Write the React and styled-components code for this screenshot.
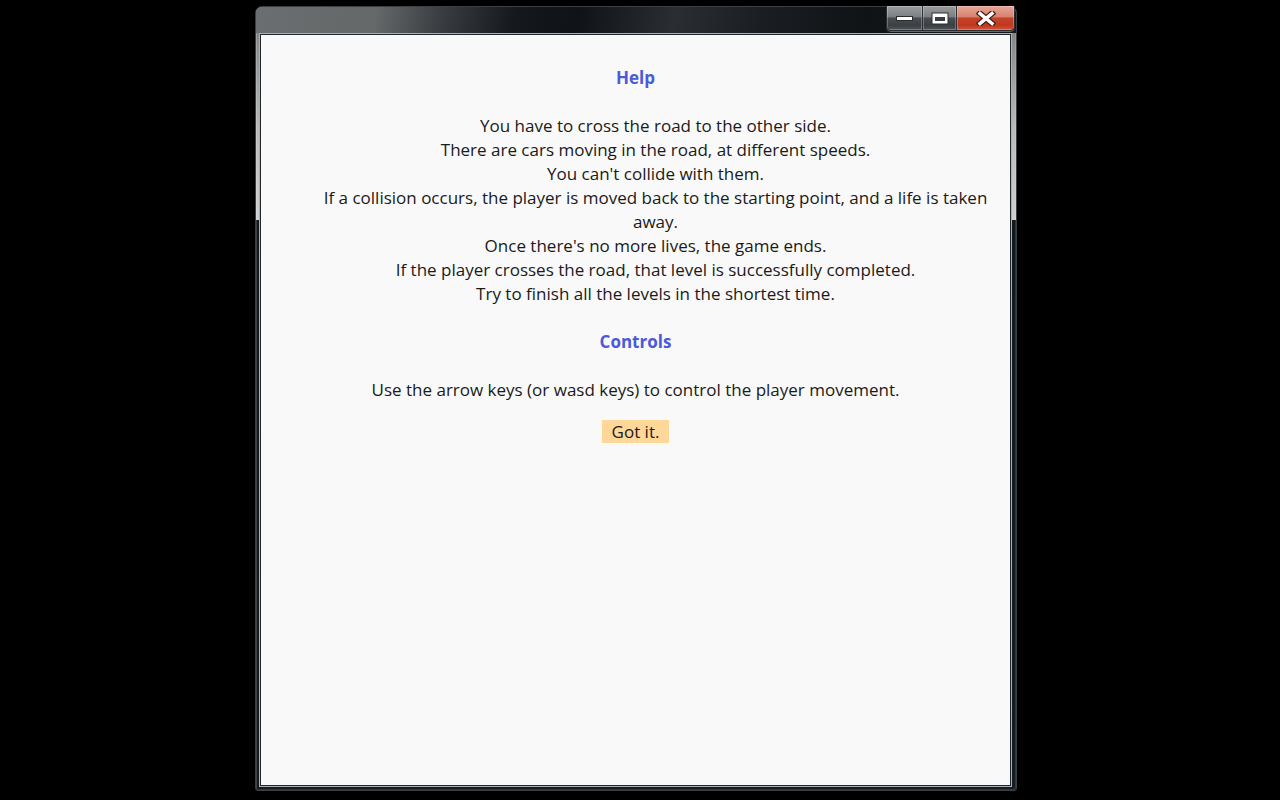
import React from "react";
import styled, { createGlobalStyle } from "styled-components";

const Global = createGlobalStyle`
  html, body { margin: 0; padding: 0; background: #000; }
  body { font-family: "Open Sans", "Noto Sans", sans-serif; }
`;

const Page = styled.div`
  width: 1280px;
  height: 800px;
  display: flex;
  justify-content: flex-start;
  align-items: flex-start;
  padding: 6px 0 0 255px;
  box-sizing: border-box;
  background: #000;
`;

const Window = styled.div`
  width: 762px;
  height: 785px;
  box-sizing: border-box;
  border-radius: 7px 7px 3px 3px;
  border: 1px solid #3a3f44;
  display: flex;
  flex-direction: column;
  padding: 0 5px 4px 4px;
  background:
    linear-gradient(to bottom, transparent 0, transparent 213px, #12181e 213px, #161c22 100%),
    linear-gradient(to bottom, #6e7173 0, #8d8f90 40px, #b9b9b9 120px, #cfcfcf 213px);
  box-shadow: inset 1px 1px 0 rgba(255, 255, 255, 0.18), inset -1px -1px 0 rgba(255, 255, 255, 0.12);
`;

const TitleBar = styled.div`
  height: 26px;
  flex: none;
  display: flex;
  justify-content: flex-end;
  align-items: flex-start;
  margin: 0 -5px 0 -4px;
  border-radius: 6px 6px 0 0;
  background: linear-gradient(100deg, #6b6e70 0%, #656869 16%, #3b3f43 24%, #15191d 34%, #0f1317 42%, #2a2e32 55%, #1b1f23 66%, #0f1316 80%, #15191d 100%);
  padding-right: 1px;
`;

const Buttons = styled.div`
  display: flex;
  height: 24px;
  margin-top: -1px;
  border: 1px solid #2a2d30;
  border-top: none;
  border-radius: 0 0 5px 5px;
  overflow: hidden;
  box-shadow: 0 1px 0 rgba(255, 255, 255, 0.35);
`;

const CapButton = styled.div`
  width: ${(p) => p.$w}px;
  height: 100%;
  display: flex;
  align-items: center;
  justify-content: center;
  box-sizing: border-box;
  border-left: ${(p) => (p.$first ? "none" : "1px solid #2c3034")};
  background: ${(p) =>
    p.$close
      ? "linear-gradient(to bottom, #e8a797 0%, #d8826f 45%, #c5432a 50%, #c0381e 80%, #d0583c 100%)"
      : "linear-gradient(to bottom, #9a9c9e 0%, #7d8083 45%, #4a4e52 50%, #3b3f43 80%, #50555a 100%)"};
  box-shadow: inset 0 0 0 1px rgba(255, 255, 255, 0.25);
`;

const Content = styled.div`
  flex: 1;
  background: #f9f9f9;
  border: 1px solid #22272c;
  box-shadow: 0 0 0 1px #a9afb5;
  margin-top: 1px;
  padding: 31px 20px 0;
  color: #1a1a1a;
  font-size: 17px;
  line-height: 24px;
  text-align: center;
`;

const Heading = styled.h2`
  margin: 0 0 24px;
  font-size: 17px;
  line-height: 24px;
  font-weight: 700;
  color: #4b5ad8;
`;

const Para = styled.p`
  margin: 0 0 ${(p) => p.$mb ?? 24}px;
  padding-left: ${(p) => (p.$indent ? "40px" : "0")};
`;

const ButtonRow = styled.div`
  display: flex;
  justify-content: center;
`;

const GotIt = styled.button`
  font: inherit;
  font-size: 17px;
  line-height: 23px;
  height: 23px;
  color: #1a1a1a;
  background: #ffd899;
  border: none;
  padding: 0 10px;
  margin: 0;
  cursor: pointer;
`;

function MinIcon() {
  return (
    <svg width="17" height="5" viewBox="0 0 17 5">
      <rect x="0.5" y="0.5" width="16" height="4" fill="#fff" stroke="#2a2d30" />
    </svg>
  );
}

function MaxIcon() {
  return (
    <svg width="18" height="13" viewBox="0 0 18 13">
      <rect x="0.5" y="0.5" width="17" height="12" fill="#2a2d30" />
      <rect x="1.5" y="1.5" width="15" height="10" fill="#fff" />
      <rect x="4" y="5" width="10" height="4" fill="#3a3e42" />
    </svg>
  );
}

function CloseIcon() {
  return (
    <svg width="20" height="15" viewBox="0 0 20 15">
      <path d="M4 2.5 L16 12.5 M16 2.5 L4 12.5" stroke="#4a1d14" strokeWidth="6" strokeLinecap="square" />
      <path d="M4 2.5 L16 12.5 M16 2.5 L4 12.5" stroke="#fff" strokeWidth="3.5" strokeLinecap="square" />
    </svg>
  );
}

export default function App() {
  return (
    <>
      <Global />
      <Page>
        <Window>
          <TitleBar>
            <Buttons>
              <CapButton $w={35} $first>
                <MinIcon />
              </CapButton>
              <CapButton $w={34}>
                <MaxIcon />
              </CapButton>
              <CapButton $w={58} $close>
                <CloseIcon />
              </CapButton>
            </Buttons>
          </TitleBar>
          <Content>
            <Heading>Help</Heading>
            <Para $indent>
              You have to cross the road to the other side.
              <br />
              There are cars moving in the road, at different speeds.
              <br />
              You can't collide with them.
              <br />
              If a collision occurs, the player is moved back to the starting point, and a life is taken away.
              <br />
              Once there's no more lives, the game ends.
              <br />
              If the player crosses the road, that level is successfully completed.
              <br />
              Try to finish all the levels in the shortest time.
            </Para>
            <Heading>Controls</Heading>
            <Para $mb={18}>Use the arrow keys (or wasd keys) to control the player movement.</Para>
            <ButtonRow>
              <GotIt>Got it.</GotIt>
            </ButtonRow>
          </Content>
        </Window>
      </Page>
    </>
  );
}
